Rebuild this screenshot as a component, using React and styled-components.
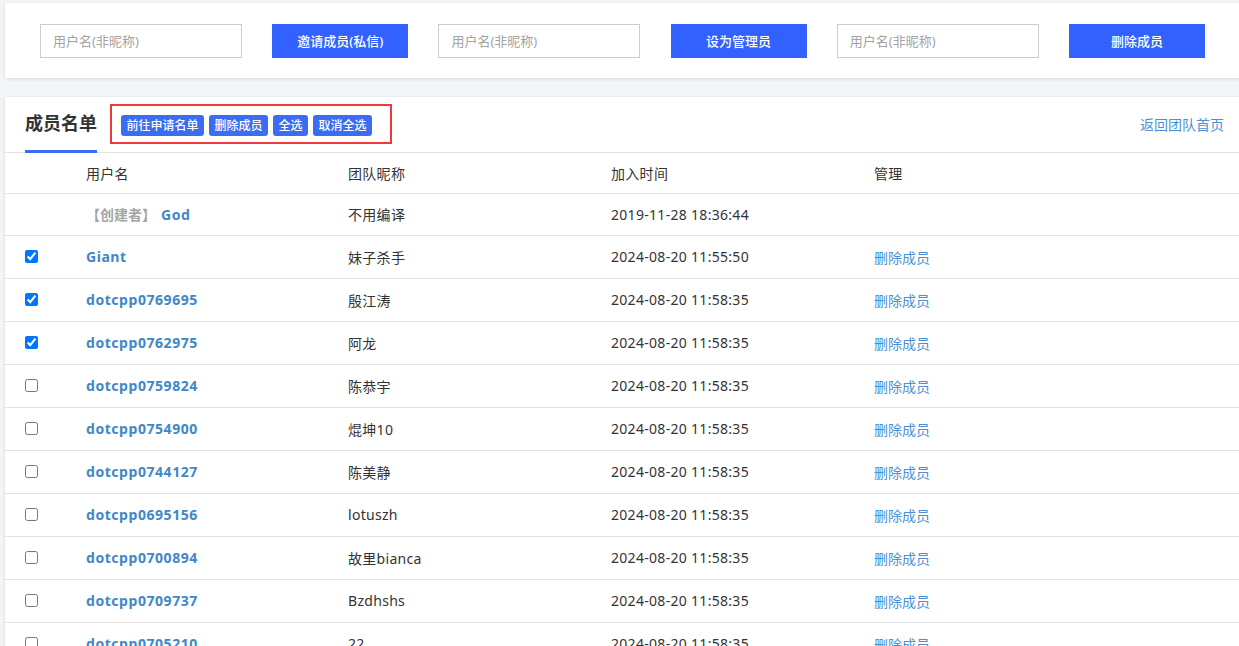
import React from 'react'
import styled, { createGlobalStyle } from 'styled-components'

const COLORS = {
  PAGE: '#f4f5f7',
  PRIMARY: '#3361ff',
  TAG: '#3a6cf4',
  TEXT: '#333333',
  MUTED: '#a5a5a5',
  LINK: '#4a90d6',
  NAME: '#3f87c9',
  LINE: '#e3e3e3'
}

const GlobalStyle = createGlobalStyle`
  html, body {
    margin: 0;
    padding: 0;
    background: ${COLORS.PAGE};
    overflow: hidden;
  }
  body {
    font-family: "Noto Sans", "Noto Sans CJK SC", sans-serif;
    color: ${COLORS.TEXT};
  }
  * { box-sizing: border-box; }
`

const ScPage = styled.div`
  padding: 3px 0 0 5px;
  width: 1260px;
`

const ScCard = styled.div`
  background: #fff;
  box-shadow: 0 1px 4px rgba(0, 0, 0, 0.12);
  width: 1250px;
  margin-bottom: ${props => props.gap || 0}px;
`

const ScToolbar = styled.div`
  display: flex;
  align-items: center;
  gap: 30.2px;
  height: 75px;
  padding-left: 35px;
`

const ScInput = styled.input`
  width: 202px;
  height: 34px;
  border: 1px solid #cccccc;
  padding: 0 12px;
  font-family: inherit;
  font-size: 13px;
  color: ${COLORS.TEXT};
  outline: none;
  &::placeholder {
    color: #a3a3a3;
  }
`

const ScButton = styled.button`
  width: 136px;
  height: 34px;
  border: none;
  background: ${COLORS.PRIMARY};
  color: #fff;
  font-family: inherit;
  font-size: 13px;
  font-weight: 500;
  cursor: pointer;
`

const ScHeader = styled.div`
  display: flex;
  align-items: center;
  height: 56px;
  padding: 0 31px 0 20px;
  border-bottom: 1px solid ${COLORS.LINE};
`

const ScTitle = styled.div`
  align-self: stretch;
  display: flex;
  align-items: center;
  font-size: 18px;
  font-weight: 700;
  color: #333;
  border-bottom: 3px solid ${COLORS.TAG};
  margin-bottom: -1px;
  padding-bottom: 4px;
`

const ScActions = styled.div`
  display: flex;
  gap: 5px;
  margin-left: 13px;
  margin-top: -2px;
  padding: 9px 18px 6px 9px;
  border: 2px solid #f0373a;
`

const ScTag = styled.button`
  height: 21px;
  padding: 0 5.5px;
  border: none;
  border-radius: 3px;
  background: ${COLORS.TAG};
  color: #fff;
  font-family: inherit;
  font-size: 12px;
  font-weight: 500;
  line-height: 21px;
  cursor: pointer;
`

const ScBack = styled.a`
  margin-left: auto;
  font-size: 14px;
  color: ${COLORS.LINK};
  text-decoration: none;
  margin-top: -2px;
`

const ScRow = styled.div`
  display: grid;
  grid-template-columns: 81px 262px 263px 263px 1fr;
  align-items: center;
  height: ${props => props.h || 43}px;
  padding-bottom: 1px;
  border-bottom: 1px solid ${COLORS.LINE};
  font-size: 14px;
  letter-spacing: 0.3px;
  color: ${COLORS.TEXT};
`

const ScCheckCell = styled.div`
  padding-left: 20px;
  display: flex;
  align-items: center;
  input {
    margin: 0;
    width: 13px;
    height: 13px;
  }
`

const ScName = styled.span`
  font-weight: 700;
  letter-spacing: 0.55px;
  color: ${COLORS.NAME};
`

const ScRole = styled.span`
  font-weight: 700;
  letter-spacing: 0;
  color: ${COLORS.MUTED};
  margin-right: 5px;
`

const ScLink = styled.a`
  color: ${COLORS.LINK};
  text-decoration: none;
  letter-spacing: 0;
`

const members = [
  { name: 'Giant', nick: '妹子杀手', time: '2024-08-20 11:55:50', checked: true },
  { name: 'dotcpp0769695', nick: '殷江涛', time: '2024-08-20 11:58:35', checked: true },
  { name: 'dotcpp0762975', nick: '阿龙', time: '2024-08-20 11:58:35', checked: true },
  { name: 'dotcpp0759824', nick: '陈恭宇', time: '2024-08-20 11:58:35' },
  { name: 'dotcpp0754900', nick: '焜坤10', time: '2024-08-20 11:58:35' },
  { name: 'dotcpp0744127', nick: '陈美静', time: '2024-08-20 11:58:35' },
  { name: 'dotcpp0695156', nick: 'lotuszh', time: '2024-08-20 11:58:35' },
  { name: 'dotcpp0700894', nick: '故里bianca', time: '2024-08-20 11:58:35' },
  { name: 'dotcpp0709737', nick: 'Bzdhshs', time: '2024-08-20 11:58:35' },
  { name: 'dotcpp0705210', nick: '22', time: '2024-08-20 11:58:35' }
]

const App = () => (
  <>
    <GlobalStyle />
    <ScPage>
      <ScCard gap={19}>
        <ScToolbar>
          <ScInput placeholder="用户名(非昵称)" />
          <ScButton>邀请成员(私信)</ScButton>
          <ScInput placeholder="用户名(非昵称)" />
          <ScButton>设为管理员</ScButton>
          <ScInput placeholder="用户名(非昵称)" />
          <ScButton>删除成员</ScButton>
        </ScToolbar>
      </ScCard>
      <ScCard>
        <ScHeader>
          <ScTitle>成员名单</ScTitle>
          <ScActions>
            <ScTag>前往申请名单</ScTag>
            <ScTag>删除成员</ScTag>
            <ScTag>全选</ScTag>
            <ScTag>取消全选</ScTag>
          </ScActions>
          <ScBack href="#">返回团队首页</ScBack>
        </ScHeader>
        <ScRow h={41}>
          <span />
          <span>用户名</span>
          <span>团队昵称</span>
          <span>加入时间</span>
          <span>管理</span>
        </ScRow>
        <ScRow h={42}>
          <span />
          <span>
            <ScRole>【创建者】</ScRole>
            <ScName>God</ScName>
          </span>
          <span>不用编译</span>
          <span>2019-11-28 18:36:44</span>
          <span />
        </ScRow>
        {members.map(m => (
          <ScRow key={m.name}>
            <ScCheckCell>
              <input type="checkbox" defaultChecked={!!m.checked} />
            </ScCheckCell>
            <ScName>{m.name}</ScName>
            <span>{m.nick}</span>
            <span>{m.time}</span>
            <span>
              <ScLink href="#">删除成员</ScLink>
            </span>
          </ScRow>
        ))}
      </ScCard>
    </ScPage>
  </>
)

export default App
